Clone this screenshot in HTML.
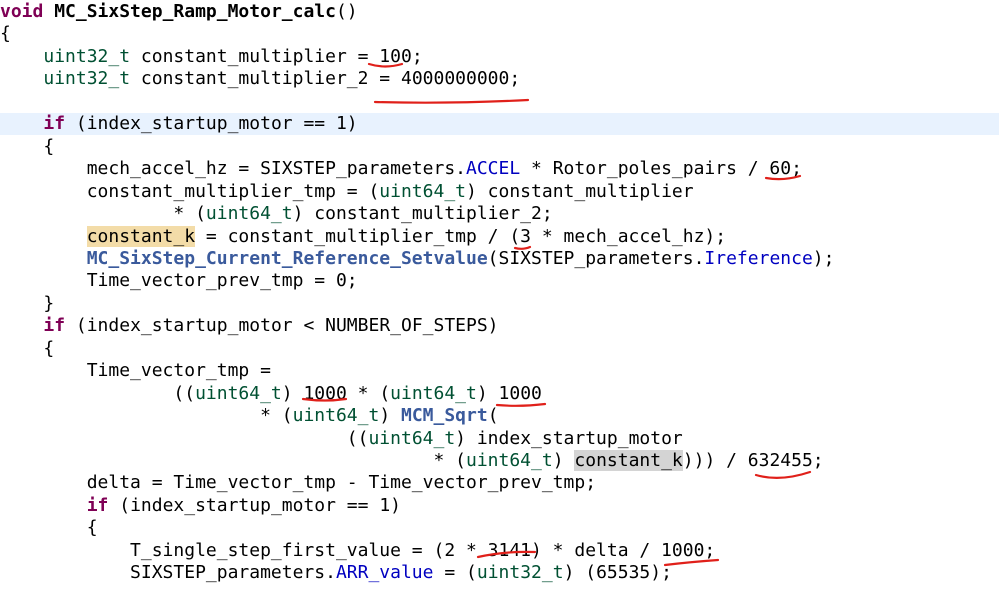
<!DOCTYPE html>
<html><head><meta charset="utf-8"><style>
html,body{margin:0;padding:0;background:#fff;width:999px;height:591px;overflow:hidden;position:relative}
.l{position:absolute;left:0;height:22.45px;line-height:22.45px;font-family:"DejaVu Sans Mono","Liberation Mono",monospace;font-size:18px;white-space:pre;color:#000}
.k{color:#7f0055;font-weight:bold}
.t{color:#005032}
.f{color:#0000c0}
.m{color:#3a5a9c;font-weight:bold}
.b{font-weight:bold}
.hl{background:#f3dca8}
.gr{background:#d4d4d4}
#cur{position:absolute;left:0;top:113px;width:999px;height:22px;background:#e8f2fe}
svg{position:absolute;left:0;top:0}
</style></head><body>
<div id="cur"></div>
<div class="l" style="top:1px"><span class="k">void</span> <span class="b">MC_SixStep_Ramp_Motor_calc</span>()</div>
<div class="l" style="top:23.45px">{</div>
<div class="l" style="top:45.9px">    <span class="t">uint32_t</span> constant_multiplier = 100;</div>
<div class="l" style="top:68.35px">    <span class="t">uint32_t</span> constant_multiplier_2 = 4000000000;</div>
<div class="l" style="top:113.25px">    <span class="k">if</span> (index_startup_motor == 1)</div>
<div class="l" style="top:135.7px">    {</div>
<div class="l" style="top:158.15px">        mech_accel_hz = SIXSTEP_parameters.<span class="f">ACCEL</span> * Rotor_poles_pairs / 60;</div>
<div class="l" style="top:180.6px">        constant_multiplier_tmp = (<span class="t">uint64_t</span>) constant_multiplier</div>
<div class="l" style="top:203.05px">                * (<span class="t">uint64_t</span>) constant_multiplier_2;</div>
<div class="l" style="top:225.5px">        <span class="hl">constant_k</span> = constant_multiplier_tmp / (3 * mech_accel_hz);</div>
<div class="l" style="top:247.95px">        <span class="m">MC_SixStep_Current_Reference_Setvalue</span>(SIXSTEP_parameters.<span class="f">Ireference</span>);</div>
<div class="l" style="top:270.4px">        Time_vector_prev_tmp = 0;</div>
<div class="l" style="top:292.85px">    }</div>
<div class="l" style="top:315.3px">    <span class="k">if</span> (index_startup_motor &lt; NUMBER_OF_STEPS)</div>
<div class="l" style="top:337.75px">    {</div>
<div class="l" style="top:360.2px">        Time_vector_tmp =</div>
<div class="l" style="top:382.65px">                ((<span class="t">uint64_t</span>) 1000 * (<span class="t">uint64_t</span>) 1000</div>
<div class="l" style="top:405.1px">                        * (<span class="t">uint64_t</span>) <span class="m">MCM_Sqrt</span>(</div>
<div class="l" style="top:427.55px">                                ((<span class="t">uint64_t</span>) index_startup_motor</div>
<div class="l" style="top:450px">                                        * (<span class="t">uint64_t</span>) <span class="gr">constant_k</span>))) / 632455;</div>
<div class="l" style="top:472.45px">        delta = Time_vector_tmp - Time_vector_prev_tmp;</div>
<div class="l" style="top:494.9px">        <span class="k">if</span> (index_startup_motor == 1)</div>
<div class="l" style="top:517.35px">        {</div>
<div class="l" style="top:539.8px">            T_single_step_first_value = (2 * 3141) * delta / 1000;</div>
<div class="l" style="top:562.25px">            SIXSTEP_parameters.<span class="f">ARR_value</span> = (<span class="t">uint32_t</span>) (65535);</div>
<svg width="999" height="591" fill="none" stroke="#e0201a" stroke-width="2.2" stroke-linecap="round">
<path d="M369 64 Q385 69 402 64"/>
<path d="M375 102 Q450 104 528 100"/>
<path d="M766 178 Q783 181 800 176"/>
<path d="M515 248 Q523 250 530 247"/>
<path d="M303 399 Q325 402 346 399"/>
<path d="M497 405 Q520 407 545 404"/>
<path d="M756 475 Q780 482 810 472"/>
<path d="M478 557 Q505 551 535 552"/>
<path d="M665 565 Q690 562 718 560"/>
</svg>
</body></html>
